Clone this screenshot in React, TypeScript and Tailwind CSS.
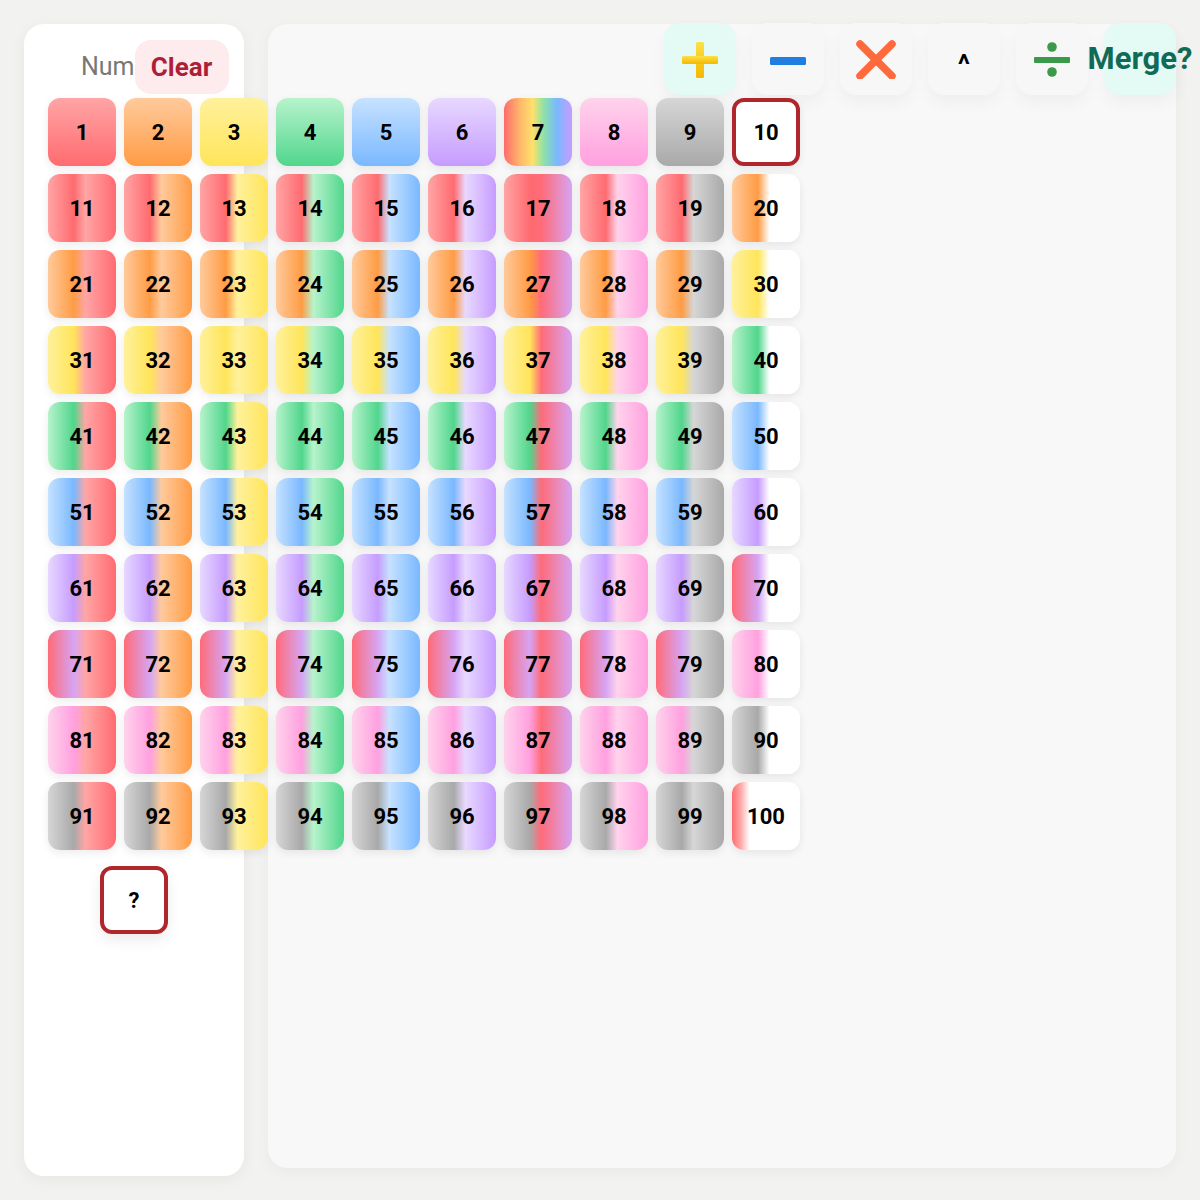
const COLORS: Record<number, [string, string]> = {
  0: ["#ffffff", "#ffffff"],
  1: ["#ffa5a5", "#ff6b70"],
  2: ["#ffca9c", "#ff9c45"],
  3: ["#fff19c", "#ffe55a"],
  4: ["#b8f3cc", "#50d68c"],
  5: ["#c6e2ff", "#7ab8ff"],
  6: ["#e8d8ff", "#c69cff"],
  7: ["#ff6b78", "#d6a4f4"],
  8: ["#ffd3ec", "#ffa0e0"],
  9: ["#d6d6d6", "#a9a9a9"],
};

const RAINBOW =
  "linear-gradient(90deg, #ff6b6b 0%, #ffb36b 22%, #ffe16b 42%, #8ee3a6 58%, #7ab8ff 78%, #c69cff 100%)";

function tileBg(n: number): string {
  if (n === 7) return RAINBOW;
  if (n < 10) {
    const [l, d] = COLORS[n];
    return `linear-gradient(180deg, ${l}, ${d})`;
  }
  if (n === 100) {
    return "linear-gradient(90deg, #ff6b70 0%, #ffa5a5 12%, #ffffff 26%, #ffffff 100%)";
  }
  const [la, da] = COLORS[Math.floor(n / 10)];
  const [lb, db] = COLORS[n % 10];
  return `linear-gradient(90deg, ${la} 0%, ${da} 38%, ${lb} 55%, ${db} 100%)`;
}

function Tile({ n }: { n: number }) {
  if (n === 10) {
    return (
      <div className="flex h-[68px] w-[68px] items-center justify-center rounded-xl border-4 border-[#b0262d] bg-white text-[22px] font-bold text-black shadow-[0_3px_8px_rgba(0,0,0,0.08)]">
        10
      </div>
    );
  }
  return (
    <div
      className="flex h-[68px] w-[68px] items-center justify-center rounded-xl text-[22px] font-bold text-black shadow-[0_3px_8px_rgba(0,0,0,0.08)]"
      style={{ backgroundImage: tileBg(n) }}
    >
      {n}
    </div>
  );
}

function OpButton({ mint, children }: { mint?: boolean; children: React.ReactNode }) {
  return (
    <button
      className={
        "flex h-[72px] w-[72px] items-center justify-center rounded-2xl shadow-[0_8px_16px_rgba(0,0,0,0.04)] " +
        (mint ? "bg-[#e4faf4]" : "bg-[#f6f7f6]")
      }
    >
      {children}
    </button>
  );
}

export default function App() {
  const nums = Array.from({ length: 100 }, (_, i) => i + 1);

  return (
    <div className="flex h-[1200px] gap-6 bg-[#f2f3f1] p-6 font-[Roboto,sans-serif]">
      {/* number board */}
      <div className="relative z-10 h-[1152px] w-[220px] shrink-0 rounded-[20px] bg-white px-6 pt-4 shadow-[0_4px_16px_rgba(0,0,0,0.05)]">
        <div className="flex h-[54px] items-center pl-[33px]">
          <span className="text-[25px] text-[#777777]">Num</span>
          <button className="flex h-[54px] w-[94px] shrink-0 items-center justify-center rounded-2xl bg-[#fdebee] text-[26px] font-bold text-[#ae1f37]">
            Clear
          </button>
        </div>
        <div className="mt-1 grid w-[752px] grid-cols-10 gap-2">
          {nums.map((n) => (
            <Tile key={n} n={n} />
          ))}
        </div>
        <div className="mx-auto mt-4 flex h-[68px] w-[68px] items-center justify-center rounded-xl border-4 border-[#b0262d] bg-white text-[22px] font-bold text-black shadow-[0_6px_14px_rgba(0,0,0,0.08)]">
          ?
        </div>
      </div>

      {/* operators */}
      <div className="h-[1144px] flex-1 rounded-[20px] bg-[#f7f8f7] shadow-[0_4px_16px_rgba(0,0,0,0.04)]">
        <div className="-mt-px flex justify-end gap-4">
          <OpButton mint>
            <svg width="40" height="40" viewBox="0 0 40 40" aria-hidden>
              <defs>
                <linearGradient id="plusg" x1="0" y1="0" x2="0" y2="1">
                  <stop offset="0" stopColor="#fde047" />
                  <stop offset="1" stopColor="#f5b800" />
                </linearGradient>
              </defs>
              <rect x="16" y="3" width="8" height="36" rx="1.5" fill="url(#plusg)" />
              <rect x="2" y="17" width="36" height="8" rx="1.5" fill="url(#plusg)" />
            </svg>
          </OpButton>
          <OpButton>
            <svg width="40" height="40" viewBox="0 0 40 40" aria-hidden>
              <rect x="2" y="18" width="36" height="8" rx="1.5" fill="#1f7fe0" />
            </svg>
          </OpButton>
          <OpButton>
            <svg width="40" height="40" viewBox="0 0 40 40" aria-hidden>
              <path d="M4 5 L36 37 M36 5 L4 37" stroke="#ff6a3d" strokeWidth="7.5" strokeLinecap="round" />
            </svg>
          </OpButton>
          <OpButton>
            <span className="mt-3 text-[28px] font-bold leading-none text-black">^</span>
          </OpButton>
          <OpButton>
            <svg width="40" height="40" viewBox="0 0 40 40" aria-hidden>
              <circle cx="20" cy="8" r="4.8" fill="#3b9a4a" />
              <rect x="2" y="18" width="36" height="6" rx="1" fill="#3b9a4a" />
              <circle cx="20" cy="33" r="4.8" fill="#3b9a4a" />
            </svg>
          </OpButton>
          <OpButton mint>
            <span className="whitespace-nowrap text-[31px] font-bold text-[#0f6b55]">Merge?</span>
          </OpButton>
        </div>
      </div>
    </div>
  );
}
